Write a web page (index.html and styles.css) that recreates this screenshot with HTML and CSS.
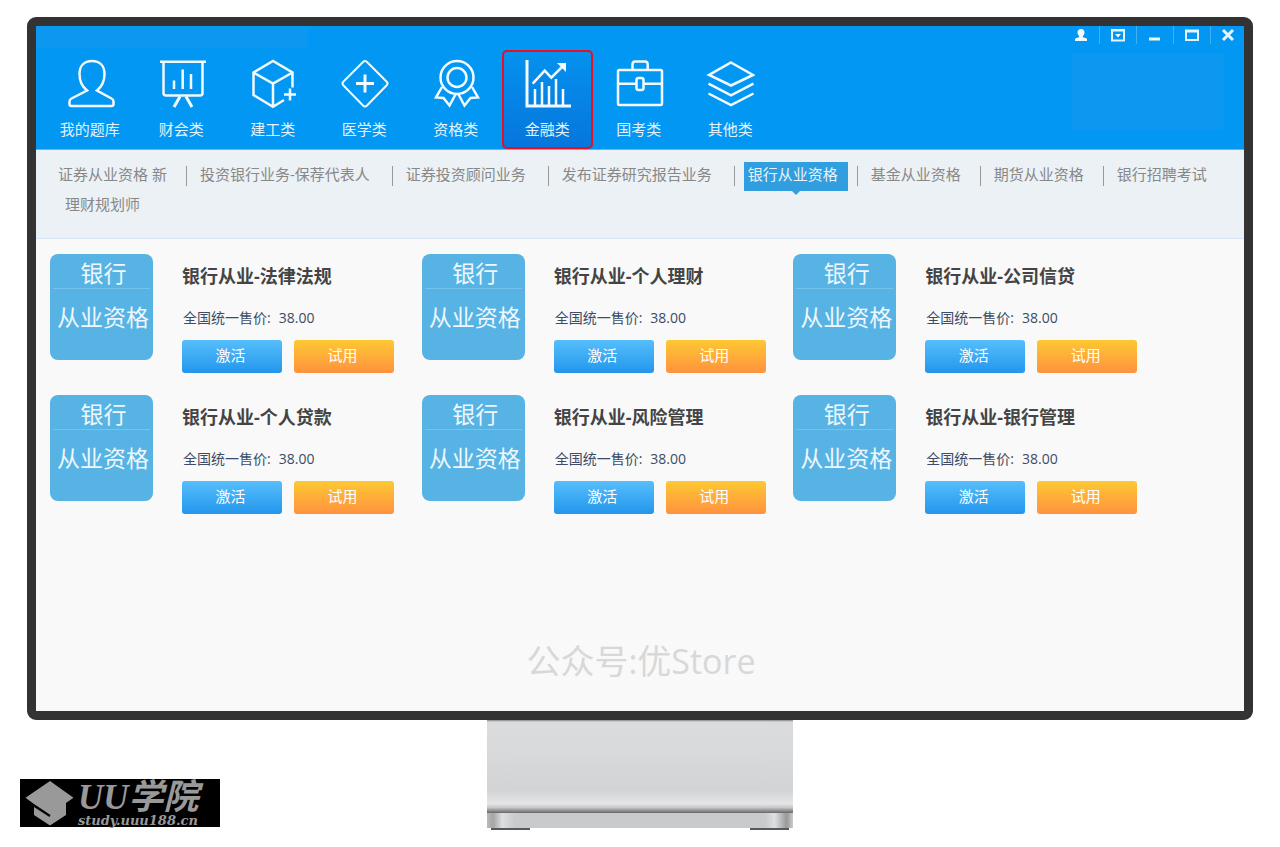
FILE: index.html
```html
<!DOCTYPE html>
<html lang="zh-CN">
<head>
<meta charset="utf-8">
<title>UU学院</title>
<link rel="stylesheet" href="styles.css">
</head>
<body>
<div class="monitor">
  <header class="header">
    <div class="controls">
      <button class="control" aria-label="用户"><svg class="control-icon" viewBox="0 0 14 14"><path class="solid" d="M7 1c2.200 0 3.500 1.500 3.500 3.500 0 1.600-.7 2.700-1.600 3.500v1.200l3.400 1c.5.200.7.600.7 1V13H1v-1.800c0-.4.2-.8.700-1l3.400-1V8C4.200 7.200 3.500 6.100 3.500 4.500 3.500 2.500 4.800 1 7 1z"/></svg></button>
      <button class="control" aria-label="菜单"><svg class="control-icon" viewBox="0 0 14 14"><path d="M1 2h12v10.500H1z"/><path d="M1 2.500h12"/><path class="solid" d="M4 6h6L7 9.500z"/></svg></button>
      <button class="control" aria-label="最小化"><svg class="control-icon" viewBox="0 0 14 14"><path class="solid" d="M1 9.500h11v3H1z"/></svg></button>
      <button class="control" aria-label="最大化"><svg class="control-icon" viewBox="0 0 14 14"><path d="M1 2.500h12v9.500H1zM1 3.500h12"/></svg></button>
      <button class="control control-last" aria-label="关闭"><svg class="control-icon" viewBox="0 0 14 14"><path class="cross" d="M2 2l10 10M12 2L2 12"/></svg></button>
    </div>
    <nav class="nav">
      <a class="nav-item" href="#"><svg class="nav-icon" viewBox="0 0 50 50"><path d="M27 2c-8 0-12.500 5-12.500 13 0 7 2.500 12.500 7.500 16.500L6.500 39.500c-1.500.8-2 1.700-2 3V45c0 1.500.7 2 2 2h40c1.300 0 2-.7 2-2v-2.500c0-1.300-.5-2.200-2-3L32 31.500C37 27.500 39.500 22 39.500 15 39.500 7 35 2 27 2z"/></svg>我的题库</a>
      <a class="nav-item" href="#"><svg class="nav-icon" viewBox="0 0 50 50"><path d="M4 2.700h46M7.500 3v31c0 1.800.7 2.500 2.500 2.500h34c1.800 0 2.500-.7 2.500-2.500V3M18 21.500V30M26.700 10.500V30M35 15v15"/><path class="bold" d="M24 37.500L18 48M30 37.500L36 48"/></svg>财会类</a>
      <a class="nav-item" href="#"><svg class="nav-icon" viewBox="0 0 50 50"><path d="M44.500 28.500V13.500L25 2 5.500 13.500V36L25 47.700 36 41M5.500 13.500L25 24.500 44.500 13.500M25 24.500V47.500M42 29.500v12M36 35.500h12"/></svg>建工类</a>
      <a class="nav-item" href="#"><svg class="nav-icon" viewBox="0 0 50 50"><path class="thin" d="M24 3Q26 1 28 3L47.500 22.500Q49.500 24.500 47.500 26.500L28 46.500Q26 48.500 24 46.500L4.500 26.500Q2.500 24.500 4.500 22.500z"/><path class="bold" d="M26 15.500v18M17 24.500h18"/></svg>医学类</a>
      <a class="nav-item" href="#"><svg class="nav-icon" viewBox="0 0 50 50"><circle cx="26" cy="18.500" r="16.500"/><circle cx="26" cy="18.500" r="9.500"/><path d="M11 28L5 38.500l7.500.5 6 7.500 6.500-12M41 28l6 10.500-7.500.5-6 7.500-6.500-12"/></svg>资格类</a>
      <a class="nav-item selected" href="#" aria-current="page"><svg class="nav-icon" viewBox="0 0 50 50"><path class="bold" d="M5 1v46h44"/><path d="M13 30v16M20 23v23M27 27v19M34 20v26M41 30v16M10.700 24.700l12-13 6.600 7L41 7"/><path class="solid" d="M35 4h9v9z"/></svg>金融类</a>
      <a class="nav-item" href="#"><svg class="nav-icon" viewBox="0 0 50 50"><rect x="4" y="11" width="44" height="35" rx="1.500"/><path d="M18.500 11V5.500c0-2 .7-3 2.700-3H31c2 0 2.700 1 2.700 3V11M4 24.700h18M30 24.700h18"/><rect x="22.500" y="19" width="7" height="12" rx="2"/></svg>国考类</a>
      <a class="nav-item" href="#"><svg class="nav-icon" viewBox="0 0 50 50"><path d="M26 3.500L48 16 26 26.500 4 16z"/><path d="M3.500 24.700L26 36.300 48.500 24.700M3.500 34.500L26 46.200 48.500 34.500"/></svg>其他类</a>
    </nav>
  </header>
  <nav>
    <ul class="subnav">
      <li class="sub"><a class="sub-link" href="#">证券从业资格 新</a></li>
      <li class="sub wide"><a class="sub-link" href="#">投资银行业务-保荐代表人</a></li>
      <li class="sub wide"><a class="sub-link" href="#">证券投资顾问业务</a></li>
      <li class="sub wide"><a class="sub-link" href="#">发布证券研究报告业务</a></li>
      <li class="sub"><a class="sub-link active" href="#">银行从业资格</a></li>
      <li class="sub"><a class="sub-link" href="#">基金从业资格</a></li>
      <li class="sub"><a class="sub-link" href="#">期货从业资格</a></li>
      <li class="sub last"><a class="sub-link" href="#">银行招聘考试</a></li>
      <li class="sub second last"><a class="sub-link" href="#">理财规划师</a></li>
    </ul>
  </nav>
  <main class="main">
    <div class="cards">
      <article class="card"><div class="cover"><span class="cover-top">银行</span><span class="cover-name">从业资格</span></div><div class="info"><h2 class="title">银行从业-法律法规</h2><p class="price">全国统一售价:<span>38.00</span></p><div class="actions"><button class="btn blue">激活</button><button class="btn orange">试用</button></div></div></article>
      <article class="card"><div class="cover"><span class="cover-top">银行</span><span class="cover-name">从业资格</span></div><div class="info"><h2 class="title">银行从业-个人理财</h2><p class="price">全国统一售价:<span>38.00</span></p><div class="actions"><button class="btn blue">激活</button><button class="btn orange">试用</button></div></div></article>
      <article class="card"><div class="cover"><span class="cover-top">银行</span><span class="cover-name">从业资格</span></div><div class="info"><h2 class="title">银行从业-公司信贷</h2><p class="price">全国统一售价:<span>38.00</span></p><div class="actions"><button class="btn blue">激活</button><button class="btn orange">试用</button></div></div></article>
      <article class="card"><div class="cover"><span class="cover-top">银行</span><span class="cover-name">从业资格</span></div><div class="info"><h2 class="title">银行从业-个人贷款</h2><p class="price">全国统一售价:<span>38.00</span></p><div class="actions"><button class="btn blue">激活</button><button class="btn orange">试用</button></div></div></article>
      <article class="card"><div class="cover"><span class="cover-top">银行</span><span class="cover-name">从业资格</span></div><div class="info"><h2 class="title">银行从业-风险管理</h2><p class="price">全国统一售价:<span>38.00</span></p><div class="actions"><button class="btn blue">激活</button><button class="btn orange">试用</button></div></div></article>
      <article class="card"><div class="cover"><span class="cover-top">银行</span><span class="cover-name">从业资格</span></div><div class="info"><h2 class="title">银行从业-银行管理</h2><p class="price">全国统一售价:<span>38.00</span></p><div class="actions"><button class="btn blue">激活</button><button class="btn orange">试用</button></div></div></article>
    </div>
    <p class="watermark">公众号:优Store</p>
  </main>
</div>
<footer class="footer">
  <a class="logo" href="#">
    <svg class="logo-icon" viewBox="0 0 54 48"><path d="M30 2L53.500 18.700 46 24V36L30 46.500 14 36V28L29.500 38 30.500 36 14 25 5.500 18.700z"/></svg>
    <span class="logo-text"><span class="logo-name"><span class="logo-latin">UU</span>学院</span><span class="logo-url">study.uuu188.cn</span></span>
  </a>
  <div class="stand"><div class="stand-neck"></div><div class="stand-base"></div><div class="stand-feet"><span class="foot"></span><span class="foot"></span></div></div>
</footer>
</body>
</html>
```
FILE: styles.css
```css
* { box-sizing: border-box; }
body {
  margin: 0;
  padding: 17px 27px 0;
  background: #fff;
  font-family: "Open Sans", "Noto Sans CJK SC", sans-serif;
}
a { color: inherit; text-decoration: none; }
button { border: 0; padding: 0; font-family: inherit; }
h2, p, ul { margin: 0; padding: 0; }

.monitor {
  border: 9px solid #333;
  border-radius: 9px;
  background: #f9f9f9;
}

.header {
  border-bottom: 1px solid #5bb8f4;
  background:
    linear-gradient(#0c98f1, #0c98f1) right 20px top 27px / 152px 77px no-repeat,
    linear-gradient(#0c98f1, #0c98f1) left top / 272px 22px no-repeat,
    #0297f2;
}
.controls { display: flex; justify-content: flex-end; height: 24px; }
.control {
  display: flex;
  align-items: center;
  justify-content: center;
  width: 37px;
  height: 18px;
  border-left: 1px solid #43aff4;
  background: none;
}
.control:first-child { border-left-color: transparent; }
.control-last { width: 34px; }
.control-icon { width: 14px; height: 14px; fill: none; stroke: #e8f4fd; stroke-width: 2; }
.control-icon .cross { stroke-width: 3; }
.control-icon .solid, .nav-icon .solid { fill: #f2f9ff; stroke: none; }

.nav {
  display: grid;
  grid-template-columns: repeat(8, 1fr);
  width: 732px;
  margin-left: 8px;
}
.nav-item {
  display: flex;
  flex-direction: column;
  align-items: center;
  height: 99px;
  padding-top: 9px;
  border-radius: 5px;
  color: #e3f3fe;
  font-size: 15px;
  line-height: 24px;
}
.nav-icon {
  width: 50px;
  height: 50px;
  margin-bottom: 8px;
  fill: none;
  stroke: #f2f9ff;
  stroke-width: 2.5;
}
.nav-icon .bold { stroke-width: 3; }
.nav-icon .thin { stroke-width: 2; }
.selected {
  background: linear-gradient(#0592ee, #0675dc);
  box-shadow: inset 0 0 0 2px #e60f26;
}

.subnav {
  display: flex;
  flex-wrap: wrap;
  align-content: flex-start;
  min-height: 89px;
  padding: 11px 0 0 9px;
  border-bottom: 1px solid #d6e4f5;
  background: #ebf1f5;
  color: #888;
  font-size: 15px;
  list-style: none;
}
.sub {
  display: flex;
  align-items: center;
  height: 30px;
  padding: 0 10px 0 9px;
  background: linear-gradient(#999, #999) right center / 1px 20px no-repeat;
}
.wide { padding-right: 13px; }
.last { background: none; }
.second { margin-left: 7px; }
.sub-link { position: relative; padding: 0 10px 4px 4px; line-height: 25px; white-space: nowrap; }
.active { background: #319edf; color: #e8f4fc; }
.active::after {
  content: "";
  position: absolute;
  top: 100%;
  left: calc(50% - 4px);
  border: 4px solid transparent;
  border-top-color: #319edf;
  border-bottom: 0;
}

.main { padding: 15px 79px 26px 14px; }
.cards { display: grid; grid-template-columns: repeat(3, 1fr); row-gap: 21px; }
.card { display: flex; gap: 29px; height: 120px; }
.cover {
  display: flex;
  flex-direction: column;
  align-items: center;
  width: 103px;
  height: 106px;
  padding: 0 3px;
  border-radius: 8px;
  background: #57b3e3;
  color: #edf7fd;
  font-size: 23px;
}
.cover-top {
  width: 100%;
  height: 35px;
  padding-left: 4px;
  border-bottom: 1px solid #74c3ed;
  line-height: 38px;
  text-align: center;
}
.cover-name { padding: 11px 0 0 3px; line-height: 34px; white-space: nowrap; }
.title { padding-top: 8px; color: #444; font-size: 18px; line-height: 28px; }
.price { padding: 17px 0 11px 1px; color: #3c4c66; font-size: 14px; line-height: 22px; }
.price span { padding-left: 8px; }
.actions { display: flex; gap: 12px; }
.btn {
  width: 100px;
  height: 33px;
  padding: 0 3px 3px 0;
  border-radius: 3px;
  color: #fff;
  font-size: 15px;
  line-height: 24px;
}
.blue { background: linear-gradient(#56befb, #2396ec); }
.orange { background: linear-gradient(#fec832, #ff923f); }

.watermark {
  padding: 122px 0 0 67px;
  color: #d8d8d8;
  font-size: 34px;
  line-height: 48px;
  text-align: center;
}

.footer { display: grid; grid-template-columns: 1fr 306px 1fr; align-items: end; }
.logo {
  display: flex;
  width: 200px;
  height: 48px;
  margin: 0 0 3px -7px;
  background: #000;
  color: #999;
  font-weight: bold;
  font-style: italic;
}
.logo-icon { flex: none; width: 54px; height: 48px; fill: #999; }
.logo-text { display: flex; flex-direction: column; padding-left: 4px; }
.logo-name { font-size: 35px; line-height: 33px; white-space: nowrap; }
.logo-latin { font-family: "Liberation Serif", serif; }
.logo-url { font-family: "DejaVu Serif", serif; font-size: 13px; line-height: 14px; }

.stand-neck {
  height: 93px;
  background: linear-gradient(#888 0, #dadbdd 2px, #d9dadc 30%, #d2d3d5 75%, #e4e5e7 90%, #c9c9cb 94%, #666 100%);
}
.stand-base {
  height: 15px;
  background: linear-gradient(90deg, #bbb, #a4a5a6 2%, #dedfe1 5%, #c9cacc 9%, #c9cacc 91%, #dedfe1 94%, #97989a 98%, #ccc);
}
.stand-feet { display: flex; justify-content: space-between; padding: 0 4px; }
.foot { width: 39px; height: 2px; background: #55585c; }
```
